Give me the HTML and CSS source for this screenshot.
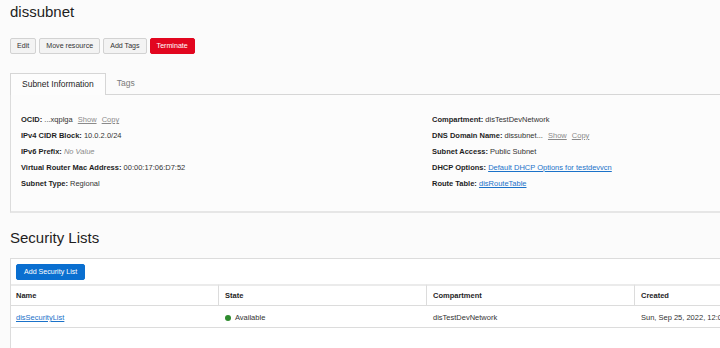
FILE: index.html
```html
<!DOCTYPE html>
<html lang="en">
<head>
    <meta charset="UTF-8">
    <meta name="viewport" content="width=device-width, initial-scale=1.0">
    <title>dissubnet</title>

    <link rel="stylesheet" href="styles.css">
</head>
<body>

    <!-- Page header -->
    <h1 class="page-title">dissubnet</h1>

    <div class="actions">
        <button class="btn">Edit</button>
        <button class="btn">Move resource</button>
        <button class="btn">Add Tags</button>
        <button class="btn btn-danger">Terminate</button>
    </div>

    <!-- Tabs -->
    <div class="tabs">
        <div class="tab active">Subnet Information</div>
        <div class="tab">Tags</div>
    </div>

    <div class="info-panel">
        <div class="info-col">
            <div class="info-row"><b>OCID:</b> ...xqplga <a class="act">Show</a> <a class="act">Copy</a></div>
            <div class="info-row"><b>IPv4 CIDR Block:</b> 10.0.2.0/24</div>
            <div class="info-row"><b>IPv6 Prefix:</b> <i class="muted">No Value</i></div>
            <div class="info-row"><b>Virtual Router Mac Address:</b> 00:00:17:06:D7:52</div>
            <div class="info-row"><b>Subnet Type:</b> Regional</div>
        </div>
        <div class="info-col">
            <div class="info-row"><b>Compartment:</b> disTestDevNetwork</div>
            <div class="info-row"><b>DNS Domain Name:</b> dissubnet... <a class="act">Show</a> <a class="act">Copy</a></div>
            <div class="info-row"><b>Subnet Access:</b> Public Subnet</div>
            <div class="info-row"><b>DHCP Options:</b> <a class="link">Default DHCP Options for testdevvcn</a></div>
            <div class="info-row"><b>Route Table:</b> <a class="link">disRouteTable</a></div>
        </div>
    </div>

    <!-- Security lists -->
    <h2 class="section-title">Security Lists</h2>

    <div class="list-box">
        <div class="toolbar">
            <button class="btn btn-primary">Add Security List</button>
        </div>
        <div class="list-grid">
            <div class="th">Name</div>
            <div class="th">State</div>
            <div class="th">Compartment</div>
            <div class="th">Created</div>

            <div class="td"><a class="link">disSecurityList</a></div>
            <div class="td"><span class="dot"></span>Available</div>
            <div class="td">disTestDevNetwork</div>
            <div class="td">Sun, Sep 25, 2022, 12:05:31 UTC</div>
        </div>
    </div>

</body>
</html>
```

FILE: styles.css
```css
* {
    margin: 0;
    padding: 0;
    box-sizing: border-box;
}

body {
    font-family: 'Liberation Sans', Arial, sans-serif;
    background-color: #fbfbfb;
    color: #222;
    padding: 0 0 0 10px;
    width: 720px;
    height: 348px;
    overflow: hidden;
}

/* Header */
.page-title {
    font-size: 15px;
    font-weight: normal;
    line-height: 18px;
    margin-top: 3px;
    color: #1e1e1e;
}

.actions {
    display: flex;
    gap: 3px;
    margin-top: 17px;
}

.btn {
    font-family: inherit;
    font-size: 7.1px;
    height: 16px;
    padding: 0 6px;
    border: 1px solid #d2d2d2;
    border-radius: 2px;
    background-color: #f3f3f3;
    color: #333;
}

.btn-danger {
    background-color: #e2061f;
    border-color: #e2061f;
    color: #fff;
}

.btn-primary {
    background-color: #0a6fd0;
    border-color: #0a6fd0;
    color: #fff;
    padding: 0 7px;
}

/* Tabs */
.tabs {
    display: flex;
    margin-top: 19px;
    border-bottom: 1px solid #d6d6d6;
}

.tab {
    font-size: 8.5px;
    line-height: 20px;
    padding: 0 11px;
    color: #7a7a7a;
}

.tab.active {
    color: #1e1e1e;
    background-color: #fdfdfd;
    border: 1px solid #d6d6d6;
    border-bottom: none;
    margin-bottom: -1px;
    padding-bottom: 1px;
}

/* Info panel */
.info-panel {
    display: grid;
    grid-template-columns: 411px 411px;
    width: 860px;
    padding: 17px 10px 19px;
    border-left: 1px solid #dcdcdc;
    border-bottom: 2px solid #e6e6e6;
    background-color: #fcfcfc;
}

.info-row {
    font-size: 7.5px;
    line-height: 16px;
    color: #333;
    white-space: nowrap;
}

.info-row b {
    color: #1e1e1e;
}

.muted {
    color: #8a8a8a;
}

.act {
    color: #8a8a8a;
    text-decoration: underline;
    margin-left: 3px;
}

.link {
    color: #1b72c9;
    text-decoration: underline;
}

/* Security lists */
.section-title {
    font-size: 15px;
    font-weight: normal;
    line-height: 18px;
    margin-top: 16px;
    color: #1e1e1e;
}

.list-box {
    margin-top: 11px;
    width: 900px;
    height: 120px;
    background-color: #fff;
    border: 1px solid #dcdcdc;
}

.toolbar {
    padding: 5px 5px 4px;
    display: flex;
}

.list-grid {
    display: grid;
    grid-template-columns: 207px 208px 208px 260px;
    font-size: 7.5px;
}

.th {
    font-weight: bold;
    color: #1e1e1e;
    height: 22px;
    line-height: 20px;
    padding: 0 6px;
    border-top: 2px solid #ebebeb;
    border-left: 1px solid #dcdcdc;
    border-bottom: 1px solid #dcdcdc;
}

.td {
    height: 22px;
    line-height: 21px;
    padding: 1px 6px 0 7px;
    color: #333;
    white-space: nowrap;
    overflow: hidden;
    border-bottom: 1px solid #dcdcdc;
}

.th:first-child {
    border-left: none;
    padding-left: 5px;
}

.td:nth-child(5) {
    padding-left: 5px;
}

.dot {
    display: inline-block;
    width: 6px;
    height: 6px;
    border-radius: 50%;
    background-color: #2e8b2e;
    margin-right: 4px;
    vertical-align: -1px;
}
```
